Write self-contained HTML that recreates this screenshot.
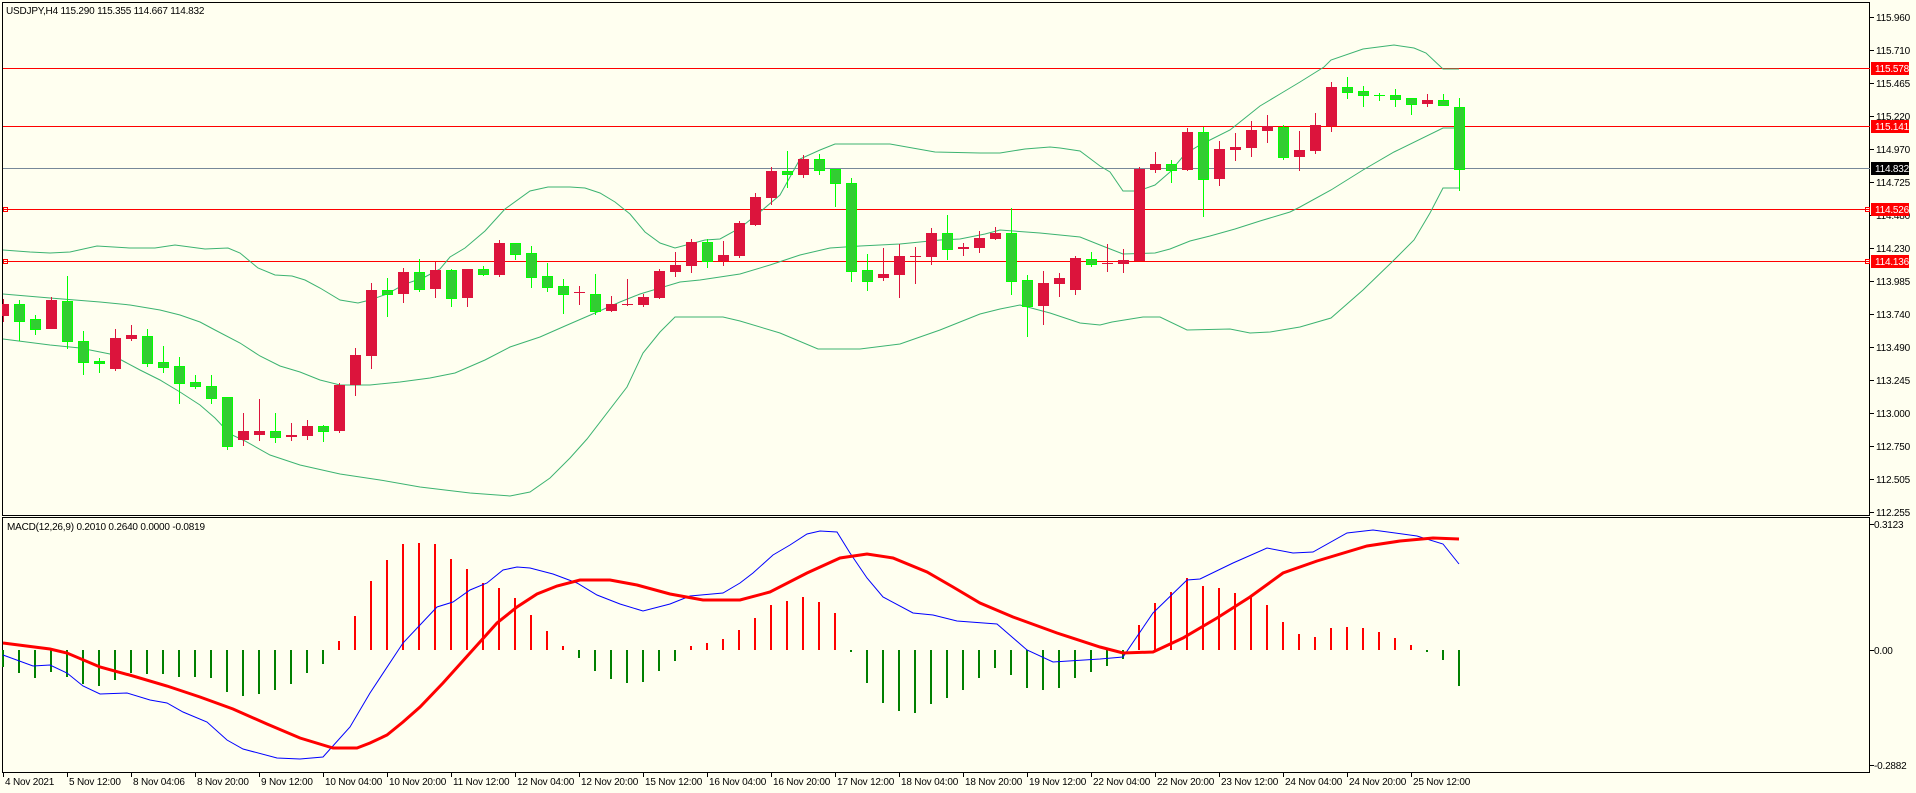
<!DOCTYPE html>
<html><head><meta charset="utf-8"><style>
html,body{margin:0;padding:0;background:#fffff0;}
svg{display:block;font-family:"Liberation Sans",sans-serif;}
svg text{letter-spacing:-0.2px;}
</style></head><body>
<svg width="1916" height="793" viewBox="0 0 1916 793" xmlns="http://www.w3.org/2000/svg">
<rect width="1916" height="793" fill="#fffff0"/>
<g fill="none" stroke="#000" stroke-width="1" shape-rendering="crispEdges">
<rect x="2.5" y="2.5" width="1867" height="513"/>
<rect x="2.5" y="517.5" width="1867" height="255"/>
</g>
<g stroke="#000" shape-rendering="crispEdges">
<path d="M1870 17.5h4M1870 50.5h4M1870 83.5h4M1870 116.5h4M1870 149.5h4M1870 182.5h4M1870 215.5h4M1870 248.5h4M1870 281.5h4M1870 314.5h4M1870 347.5h4M1870 380.5h4M1870 413.5h4M1870 446.5h4M1870 479.5h4M1870 512.5h4M1870 524.5h4M1870 650.5h4M1870 765.5h4"/>
<path d="M3.5 773v4M67.5 773v4M131.5 773v4M195.5 773v4M259.5 773v4M323.5 773v4M387.5 773v4M451.5 773v4M515.5 773v4M579.5 773v4M643.5 773v4M707.5 773v4M771.5 773v4M835.5 773v4M899.5 773v4M963.5 773v4M1027.5 773v4M1091.5 773v4M1155.5 773v4M1219.5 773v4M1283.5 773v4M1347.5 773v4M1411.5 773v4"/>
</g>
<g font-size="10" fill="#000">
<text x="1876" y="21">115.960</text><text x="1876" y="54">115.710</text><text x="1876" y="87">115.465</text><text x="1876" y="120">115.220</text><text x="1876" y="153">114.970</text><text x="1876" y="186">114.725</text><text x="1876" y="219">114.480</text><text x="1876" y="252">114.230</text><text x="1876" y="285">113.985</text><text x="1876" y="318">113.740</text><text x="1876" y="351">113.490</text><text x="1876" y="384">113.245</text><text x="1876" y="417">113.000</text><text x="1876" y="450">112.750</text><text x="1876" y="483">112.505</text><text x="1876" y="516">112.255</text>
<text x="1874" y="528">0.3123</text><text x="1874" y="654">0.00</text><text x="1874" y="769">-0.2882</text>
<text x="6" y="14">USDJPY,H4  115.290 115.355 114.667 114.832</text>
<text x="7" y="530">MACD(12,26,9) 0.2010 0.2640 0.0000 -0.0819</text>
</g>
<g font-size="10" fill="#000">
<text x="5" y="785">4 Nov 2021</text><text x="69" y="785">5 Nov 12:00</text><text x="133" y="785">8 Nov 04:06</text><text x="197" y="785">8 Nov 20:00</text><text x="261" y="785">9 Nov 12:00</text><text x="325" y="785">10 Nov 04:00</text><text x="389" y="785">10 Nov 20:00</text><text x="453" y="785">11 Nov 12:00</text><text x="517" y="785">12 Nov 04:00</text><text x="581" y="785">12 Nov 20:00</text><text x="645" y="785">15 Nov 12:00</text><text x="709" y="785">16 Nov 04:00</text><text x="773" y="785">16 Nov 20:00</text><text x="837" y="785">17 Nov 12:00</text><text x="901" y="785">18 Nov 04:00</text><text x="965" y="785">18 Nov 20:00</text><text x="1029" y="785">19 Nov 12:00</text><text x="1093" y="785">22 Nov 04:00</text><text x="1157" y="785">22 Nov 20:00</text><text x="1221" y="785">23 Nov 12:00</text><text x="1285" y="785">24 Nov 04:00</text><text x="1349" y="785">24 Nov 20:00</text><text x="1413" y="785">25 Nov 12:00</text>
</g>
<g shape-rendering="crispEdges" stroke-width="1">
<path d="M3 68.5H1870M3 126.5H1870M3 209.5H1870M3 261.5H1870" stroke="#ff0000"/>
<path d="M3 168.5H1870" stroke="#778899"/>
</g>
<g fill="none" stroke="#ff0000" shape-rendering="crispEdges">
<rect x="3.5" y="207.5" width="4" height="4"/><rect x="3.5" y="259.5" width="4" height="4"/>
<rect x="1865.5" y="207.5" width="4" height="4"/><rect x="1865.5" y="259.5" width="4" height="4"/>
</g>
<g font-size="10">
<rect x="1871" y="62" width="38" height="13" fill="#ff0000"/><text x="1875" y="72" fill="#fff">115.578</text>
<rect x="1871" y="120" width="38" height="13" fill="#ff0000"/><text x="1875" y="130" fill="#fff">115.141</text>
<rect x="1871" y="162" width="38" height="13" fill="#000"/><text x="1875" y="172" fill="#fff">114.832</text>
<rect x="1871" y="203" width="38" height="13" fill="#ff0000"/><text x="1875" y="213" fill="#fff">114.526</text>
<rect x="1871" y="255" width="38" height="13" fill="#ff0000"/><text x="1875" y="265" fill="#fff">114.136</text>
</g>
<g fill="none" stroke="#3cb371" stroke-width="1">
<polyline points="3,250 30,252 50,253 70,252 97,246 130,248 155,248 175,245 190,247 205,249 228,248 240,253 258,268 275,275 292,276 305,280 320,288 340,300 358,303 370,300 387,294 405,284 423,278 440,269 450,257 465,248 485,231 505,209 530,191 548,187 570,187 585,188 600,193 615,202 630,214 645,232 660,243 675,248 690,244 705,240 720,239 740,228 760,212 780,195 800,159 820,150 835,144 890,144 935,152 980,153 1000,153 1025,149 1050,147 1060,148 1080,151 1100,166 1110,172 1123,191 1138,191 1155,185 1170,172 1185,154 1200,145 1230,130 1260,106 1280,94 1300,82 1324,67 1331,60 1363,49 1394,45 1414,48 1426,53 1443,69 1459,69"/>
<polyline points="3,294 50,298 100,302 130,305 160,310 180,315 200,322 215,330 240,343 260,356 280,366 300,372 320,380 340,385 370,385 400,382 430,378 455,373 485,360 510,347 540,337 565,326 595,313 620,302 640,294 660,288 680,282 700,280 740,274 770,265 800,255 830,248 860,246 900,244 940,240 960,239 985,234 1000,230 1040,233 1080,237 1100,245 1123,254 1155,253 1170,249 1190,241 1210,236 1235,229 1260,221 1290,212 1300,207 1331,190 1363,170 1394,152 1443,128 1459,128"/>
<polyline points="3,339 50,345 80,348 110,354 125,362 140,370 160,380 180,392 200,405 215,418 230,434 245,441 270,455 300,465 340,474 380,480 420,487 470,493 510,496 530,492 550,478 570,458 587,439 627,387 643,353 660,332 675,317 723,317 740,321 780,333 818,349 860,349 900,344 940,330 980,314 1000,309 1020,305 1050,313 1080,323 1100,325 1112,322 1143,317 1160,317 1187,330 1230,329 1250,333 1270,332 1300,327 1331,318 1363,290 1394,260 1414,240 1430,213 1443,188 1459,188"/>
</g>
<g fill="#dc143c" shape-rendering="crispEdges">
<rect x="3" y="299" width="1" height="23"/><rect x="2" y="304" width="7" height="12"/>
<rect x="51" y="297" width="1" height="32"/><rect x="46" y="300" width="11" height="29"/>
<rect x="115" y="329" width="1" height="42"/><rect x="110" y="338" width="11" height="31"/>
<rect x="131" y="325" width="1" height="16"/><rect x="126" y="335" width="11" height="4"/>
<rect x="243" y="413" width="1" height="33"/><rect x="238" y="431" width="11" height="9"/>
<rect x="259" y="399" width="1" height="42"/><rect x="254" y="431" width="11" height="4"/>
<rect x="291" y="423" width="1" height="18"/><rect x="286" y="435" width="11" height="2"/>
<rect x="307" y="420" width="1" height="20"/><rect x="302" y="426" width="11" height="10"/>
<rect x="339" y="383" width="1" height="50"/><rect x="334" y="385" width="11" height="46"/>
<rect x="355" y="348" width="1" height="48"/><rect x="350" y="355" width="11" height="30"/>
<rect x="371" y="283" width="1" height="86"/><rect x="366" y="290" width="11" height="66"/>
<rect x="403" y="268" width="1" height="35"/><rect x="398" y="272" width="11" height="22"/>
<rect x="435" y="262" width="1" height="36"/><rect x="430" y="270" width="11" height="19"/>
<rect x="467" y="269" width="1" height="38"/><rect x="462" y="269" width="11" height="29"/>
<rect x="499" y="240" width="1" height="37"/><rect x="494" y="243" width="11" height="32"/>
<rect x="579" y="286" width="1" height="19"/><rect x="574" y="292" width="11" height="1"/>
<rect x="611" y="296" width="1" height="16"/><rect x="606" y="304" width="11" height="7"/>
<rect x="627" y="279" width="1" height="27"/><rect x="622" y="304" width="11" height="1"/>
<rect x="643" y="294" width="1" height="13"/><rect x="638" y="297" width="11" height="8"/>
<rect x="659" y="269" width="1" height="30"/><rect x="654" y="271" width="11" height="27"/>
<rect x="675" y="252" width="1" height="25"/><rect x="670" y="265" width="11" height="7"/>
<rect x="691" y="239" width="1" height="34"/><rect x="686" y="242" width="11" height="24"/>
<rect x="723" y="241" width="1" height="25"/><rect x="718" y="255" width="11" height="6"/>
<rect x="739" y="221" width="1" height="37"/><rect x="734" y="223" width="11" height="33"/>
<rect x="755" y="193" width="1" height="33"/><rect x="750" y="197" width="11" height="28"/>
<rect x="771" y="167" width="1" height="38"/><rect x="766" y="171" width="11" height="27"/>
<rect x="803" y="155" width="1" height="23"/><rect x="798" y="159" width="11" height="16"/>
<rect x="883" y="248" width="1" height="33"/><rect x="878" y="274" width="11" height="4"/>
<rect x="899" y="244" width="1" height="54"/><rect x="894" y="256" width="11" height="19"/>
<rect x="915" y="247" width="1" height="37"/><rect x="910" y="256" width="11" height="1"/>
<rect x="931" y="228" width="1" height="37"/><rect x="926" y="233" width="11" height="24"/>
<rect x="963" y="243" width="1" height="13"/><rect x="958" y="247" width="11" height="2"/>
<rect x="979" y="231" width="1" height="22"/><rect x="974" y="238" width="11" height="10"/>
<rect x="995" y="227" width="1" height="13"/><rect x="990" y="233" width="11" height="6"/>
<rect x="1043" y="271" width="1" height="54"/><rect x="1038" y="283" width="11" height="23"/>
<rect x="1059" y="273" width="1" height="24"/><rect x="1054" y="278" width="11" height="6"/>
<rect x="1075" y="256" width="1" height="39"/><rect x="1070" y="258" width="11" height="32"/>
<rect x="1107" y="244" width="1" height="28"/><rect x="1102" y="263" width="11" height="1"/>
<rect x="1123" y="249" width="1" height="24"/><rect x="1118" y="260" width="11" height="4"/>
<rect x="1139" y="167" width="1" height="94"/><rect x="1134" y="169" width="11" height="92"/>
<rect x="1155" y="152" width="1" height="21"/><rect x="1150" y="164" width="11" height="6"/>
<rect x="1187" y="128" width="1" height="43"/><rect x="1182" y="132" width="11" height="38"/>
<rect x="1219" y="141" width="1" height="45"/><rect x="1214" y="149" width="11" height="30"/>
<rect x="1235" y="133" width="1" height="28"/><rect x="1230" y="147" width="11" height="3"/>
<rect x="1251" y="121" width="1" height="36"/><rect x="1246" y="130" width="11" height="18"/>
<rect x="1267" y="115" width="1" height="28"/><rect x="1262" y="126" width="11" height="5"/>
<rect x="1299" y="131" width="1" height="40"/><rect x="1294" y="150" width="11" height="7"/>
<rect x="1315" y="113" width="1" height="41"/><rect x="1310" y="125" width="11" height="26"/>
<rect x="1331" y="82" width="1" height="50"/><rect x="1326" y="87" width="11" height="39"/>
<rect x="1427" y="94" width="1" height="13"/><rect x="1422" y="100" width="11" height="4"/>
</g>
<g fill="#00ff00" shape-rendering="crispEdges">
<rect x="19" y="300" width="1" height="41"/><rect x="35" y="315" width="1" height="20"/><rect x="67" y="276" width="1" height="73"/><rect x="83" y="331" width="1" height="44"/><rect x="99" y="358" width="1" height="15"/><rect x="147" y="329" width="1" height="38"/><rect x="163" y="346" width="1" height="27"/><rect x="179" y="357" width="1" height="47"/><rect x="195" y="375" width="1" height="14"/><rect x="211" y="375" width="1" height="29"/><rect x="227" y="397" width="1" height="53"/><rect x="275" y="413" width="1" height="30"/><rect x="323" y="425" width="1" height="17"/><rect x="387" y="278" width="1" height="39"/><rect x="419" y="259" width="1" height="33"/><rect x="451" y="269" width="1" height="38"/><rect x="483" y="266" width="1" height="10"/><rect x="515" y="243" width="1" height="17"/><rect x="531" y="246" width="1" height="42"/><rect x="547" y="263" width="1" height="29"/><rect x="563" y="279" width="1" height="35"/><rect x="595" y="274" width="1" height="41"/><rect x="707" y="239" width="1" height="29"/><rect x="787" y="151" width="1" height="37"/><rect x="819" y="154" width="1" height="21"/><rect x="835" y="169" width="1" height="38"/><rect x="851" y="178" width="1" height="104"/><rect x="867" y="254" width="1" height="37"/><rect x="947" y="215" width="1" height="45"/><rect x="1011" y="208" width="1" height="87"/><rect x="1027" y="275" width="1" height="62"/><rect x="1091" y="252" width="1" height="15"/><rect x="1171" y="160" width="1" height="23"/><rect x="1203" y="127" width="1" height="90"/><rect x="1283" y="125" width="1" height="35"/><rect x="1347" y="77" width="1" height="22"/><rect x="1363" y="86" width="1" height="21"/><rect x="1379" y="93" width="1" height="8"/><rect x="1395" y="89" width="1" height="18"/><rect x="1411" y="98" width="1" height="17"/><rect x="1443" y="94" width="1" height="11"/><rect x="1459" y="98" width="1" height="93"/>
<rect x="1374" y="95" width="11" height="1"/>
</g>
<g fill="#32cd32" stroke="#00ff00" stroke-width="1" shape-rendering="crispEdges">
<rect x="14.5" y="304.5" width="10" height="17"/><rect x="30.5" y="319.5" width="10" height="10"/><rect x="62.5" y="301.5" width="10" height="40"/><rect x="78.5" y="341.5" width="10" height="21"/><rect x="94.5" y="361.5" width="10" height="2"/><rect x="142.5" y="336.5" width="10" height="27"/><rect x="158.5" y="362.5" width="10" height="5"/><rect x="174.5" y="366.5" width="10" height="17"/><rect x="190.5" y="382.5" width="10" height="4"/><rect x="206.5" y="386.5" width="10" height="12"/><rect x="222.5" y="397.5" width="10" height="49"/><rect x="270.5" y="431.5" width="10" height="6"/><rect x="318.5" y="426.5" width="10" height="5"/><rect x="382.5" y="290.5" width="10" height="4"/><rect x="414.5" y="272.5" width="10" height="17"/><rect x="446.5" y="270.5" width="10" height="28"/><rect x="478.5" y="269.5" width="10" height="5"/><rect x="510.5" y="243.5" width="10" height="11"/><rect x="526.5" y="253.5" width="10" height="24"/><rect x="542.5" y="276.5" width="10" height="11"/><rect x="558.5" y="286.5" width="10" height="8"/><rect x="590.5" y="294.5" width="10" height="17"/><rect x="702.5" y="242.5" width="10" height="19"/><rect x="782.5" y="171.5" width="10" height="3"/><rect x="814.5" y="159.5" width="10" height="11"/><rect x="830.5" y="169.5" width="10" height="14"/><rect x="846.5" y="183.5" width="10" height="88"/><rect x="862.5" y="270.5" width="10" height="11"/><rect x="942.5" y="233.5" width="10" height="16"/><rect x="1006.5" y="233.5" width="10" height="48"/><rect x="1022.5" y="280.5" width="10" height="26"/><rect x="1086.5" y="259.5" width="10" height="5"/><rect x="1166.5" y="164.5" width="10" height="6"/><rect x="1198.5" y="132.5" width="10" height="47"/><rect x="1278.5" y="127.5" width="10" height="30"/><rect x="1342.5" y="87.5" width="10" height="5"/><rect x="1358.5" y="91.5" width="10" height="4"/><rect x="1390.5" y="95.5" width="10" height="4"/><rect x="1406.5" y="98.5" width="10" height="6"/><rect x="1438.5" y="100.5" width="10" height="5"/><rect x="1454.5" y="107.5" width="10" height="62"/>
</g>
<g stroke="#008000" stroke-width="2" shape-rendering="crispEdges">
<path d="M3 650V667M19 650V673M35 650V678M51 650V672M67 650V677M83 650V684M99 650V686M115 650V680M131 650V673M147 650V674M163 650V674M179 650V677M195 650V677M211 650V678M227 650V692M243 650V696M259 650V694M275 650V690M291 650V684M307 650V673M323 650V664M579 650V658M595 650V671M611 650V679M627 650V683M643 650V682M659 650V671M675 650V661M851 650V652M867 650V683M883 650V703M899 650V711M915 650V713M931 650V704M947 650V698M963 650V690M979 650V678M995 650V668M1011 650V675M1027 650V688M1043 650V690M1059 650V688M1075 650V678M1091 650V672M1107 650V666M1123 650V659M1427 650V652M1443 650V660M1459 650V686"/>
</g>
<g stroke="#ff0000" stroke-width="2" shape-rendering="crispEdges">
<path d="M339 650V641M355 650V616M371 650V581M387 650V560M403 650V544M419 650V543M435 650V544M451 650V559M467 650V569M483 650V583M499 650V588M515 650V598M531 650V615M547 650V631M563 650V646M691 650V646M707 650V643M723 650V639M739 650V630M755 650V618M771 650V605M787 650V601M803 650V597M819 650V602M835 650V613M1139 650V625M1155 650V603M1171 650V592M1187 650V578M1203 650V586M1219 650V588M1235 650V593M1251 650V596M1267 650V605M1283 650V622M1299 650V634M1315 650V637M1331 650V628M1347 650V627M1363 650V628M1379 650V632M1395 650V638M1411 650V645"/>
</g>
<polyline fill="none" stroke="#0000ff" stroke-width="1" points="3,655 33,666 50,665 67,673 83,686 100,694 127,693 150,700 167,703 183,712 207,722 227,740 243,749 277,758 300,759 323,757 350,727 370,693 403,643 437,607 453,602 470,590 487,583 503,570 517,567 530,568 553,574 577,583 597,595 620,604 643,611 670,604 690,596 723,593 740,583 753,573 773,555 790,545 807,534 820,531 837,532 850,553 867,578 883,597 913,613 933,615 957,621 997,624 1027,650 1053,662 1100,659 1123,657 1153,613 1187,580 1200,579 1233,563 1267,548 1293,553 1313,552 1347,533 1373,530 1417,536 1443,544 1459,564"/>
<polyline fill="none" stroke="#ff0000" stroke-width="3" points="3,643 50,649 67,653 100,667 133,676 167,686 200,697 233,709 267,724 300,738 333,748 357,748 370,743 387,735 403,722 420,707 443,683 470,653 497,623 517,607 537,594 557,586 580,580 610,580 637,585 670,594 703,600 740,600 770,592 807,573 840,558 867,554 893,558 927,572 953,587 980,603 1013,617 1057,633 1100,647 1123,653 1153,652 1183,638 1217,618 1250,597 1283,573 1317,561 1367,546 1400,541 1433,538 1459,539"/>
</svg>
</body></html>
